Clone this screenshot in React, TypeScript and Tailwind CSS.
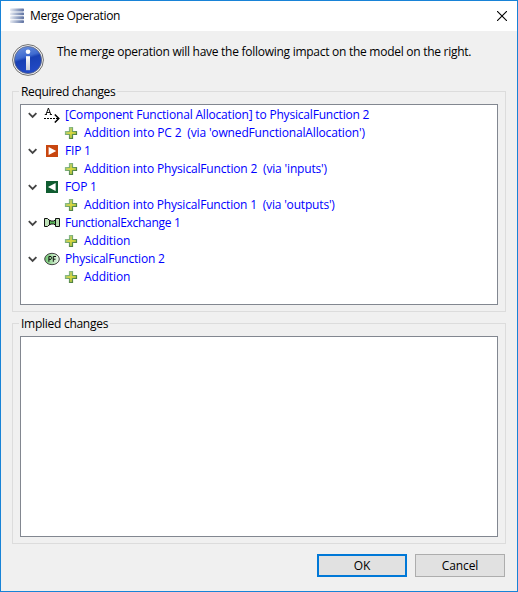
import type { ReactNode } from "react";

function MergeIcon() {
  return (
    <svg width="16" height="16" viewBox="0 0 16 16" className="shrink-0">
      <defs>
        <linearGradient id="bar" x1="0" x2="1" y1="0" y2="0">
          <stop offset="0" stopColor="#e6eaf2" />
          <stop offset="0.5" stopColor="#9dabc9" />
          <stop offset="1" stopColor="#5c70a0" />
        </linearGradient>
      </defs>
      {[0.5, 4.4, 8.3, 12.2].map((y) => (
        <rect key={y} x="1" y={y} width="14" height="2.9" rx="0.8" fill="url(#bar)" />
      ))}
    </svg>
  );
}

function InfoIcon() {
  return (
    <svg width="32" height="32" viewBox="0 0 32 32" className="shrink-0">
      <defs>
        <linearGradient id="ball" x1="0" x2="0.3" y1="0" y2="1">
          <stop offset="0" stopColor="#7397e0" />
          <stop offset="0.45" stopColor="#3f6bd0" />
          <stop offset="0.55" stopColor="#1840b4" />
          <stop offset="1" stopColor="#2149c4" />
        </linearGradient>
        <linearGradient id="stem" x1="0" x2="0" y1="0" y2="1">
          <stop offset="0" stopColor="#ffffff" />
          <stop offset="1" stopColor="#c9cdd6" />
        </linearGradient>
      </defs>
      <circle cx="16" cy="16" r="15.4" fill="#f4f4f4" stroke="#6f6f6f" strokeWidth="1" />
      <circle cx="16" cy="16" r="13.6" fill="url(#ball)" stroke="#5c6580" strokeWidth="0.8" />
      <circle cx="16" cy="7.8" r="2.3" fill="#fff" />
      <path d="M14 12.2h4v14h-4z" fill="url(#stem)" />
    </svg>
  );
}

function AllocationIcon() {
  return (
    <svg width="16" height="16" viewBox="0 0 16 16" className="shrink-0" fill="none" stroke="#000">
      <path d="M2 7.5 L4.4 1 L6.8 7.5 M2.8 5.5H6 M.8 7.5H3 M5.8 7.5H8" strokeWidth="0.9" />
      <path d="M0 11.5H14" strokeDasharray="2 1" />
      <path d="M10.8 7.5 L14.8 11.5 L10.8 15.5" strokeWidth="1.5" />
    </svg>
  );
}

function InPortIcon() {
  return (
    <svg width="16" height="16" viewBox="0 0 16 16" className="shrink-0">
      <rect x="2" y="2" width="12" height="12" fill="#c8460f" />
      <path d="M4.6 4 L12.2 8 L4.6 12Z" fill="#fff" />
    </svg>
  );
}

function OutPortIcon() {
  return (
    <svg width="16" height="16" viewBox="0 0 16 16" className="shrink-0">
      <rect x="2" y="2" width="12" height="12" fill="#0f5c30" />
      <path d="M11.6 4 L4 8 L11.6 12Z" fill="#fff" />
    </svg>
  );
}

function ExchangeIcon() {
  return (
    <svg width="16" height="16" viewBox="0 0 16 16" className="shrink-0" stroke="#111">
      <path d="M.5 3.5H3.5L5.5 5.5V9.5L3.5 11.5H.5Z" fill="#c0e2b9" />
      <path d="M11.5 3.5H15.5V11.5H11.5Z" fill="#b5dcae" />
      <path d="M5.5 5L7 6H9.5L11.5 5V10L9.5 9H7L5.5 10Z" fill="#5cb85c" />
    </svg>
  );
}

function FunctionIcon() {
  return (
    <svg width="16" height="16" viewBox="0 0 16 16" className="shrink-0">
      <defs>
        <linearGradient id="oval" x1="0" x2="1" y1="0" y2="0">
          <stop offset="0" stopColor="#6cc46c" />
          <stop offset="1" stopColor="#f0faee" />
        </linearGradient>
      </defs>
      <ellipse cx="8" cy="8" rx="7.3" ry="5.7" fill="url(#oval)" stroke="#444" />
      <path d="M4.9 10.8V5.5H7L7.6 6.2V7.6L7 8.3H5 M9.3 10.8V5.5H12 M9.3 8.2H11.5" fill="none" stroke="#111" />
    </svg>
  );
}

function PlusIcon() {
  return (
    <svg width="16" height="16" viewBox="0 0 16 16" className="shrink-0">
      <defs>
        <linearGradient id="plus" x1="0" x2="1" y1="0" y2="1">
          <stop offset="0.1" stopColor="#9cc486" />
          <stop offset="0.5" stopColor="#dcd83c" />
          <stop offset="0.9" stopColor="#8fb94c" />
        </linearGradient>
        <linearGradient id="plusEdge" x1="0" x2="1" y1="0" y2="1">
          <stop offset="0.2" stopColor="#8cbd88" />
          <stop offset="0.8" stopColor="#4f8040" />
        </linearGradient>
      </defs>
      <path d="M6.5 2.5H9.5V6.5H13.5V9.5H9.5V13.5H6.5V9.5H2.5V6.5H6.5Z" fill="url(#plus)" stroke="url(#plusEdge)" strokeWidth="1.2" />
    </svg>
  );
}

function Chevron() {
  return (
    <svg width="10" height="8" viewBox="0 0 10 8" className="mr-[6px] shrink-0" fill="none" stroke="#444444" strokeWidth="1.8">
      <path d="M.8 2.1 L4.6 5.9 L8.4 2.1" />
    </svg>
  );
}

function Parent({ icon, children, spacing }: { icon: ReactNode; children: ReactNode; spacing: string }) {
  return (
    <div className="flex h-[18px] items-center pl-[7px]">
      <Chevron />
      {icon}
      <span className={`ml-[5px] whitespace-pre ${spacing}`}>{children}</span>
    </div>
  );
}

function Child({ children, spacing }: { children: ReactNode; spacing: string }) {
  return (
    <div className="flex h-[18px] items-center pl-[42px]">
      <PlusIcon />
      <span className={`ml-[5px] whitespace-pre ${spacing}`}>{children}</span>
    </div>
  );
}

function Group({ title, spacing, children }: { title: string; spacing: string; children?: ReactNode }) {
  return (
    <section className="flex h-[221px] flex-col border border-[#dcdcdc] px-[7px] pb-[6px]">
      <h2 className={`-mt-[8px] mb-[4px] -ml-px h-4 self-start bg-[#f0f0f0] px-[2px] leading-4 ${spacing}`}>{title}</h2>
      <div className="min-h-0 flex-1 border border-[#828790] bg-white pt-px text-[#0000ff]">{children}</div>
    </section>
  );
}

export default function App() {
  return (
    <div className="flex h-[592px] w-[518px] flex-col border border-[#1883d7] bg-[#f0f0f0] font-['Open_Sans',sans-serif] text-[12px] leading-4 text-black">
      <header className="flex h-[30px] shrink-0 items-center bg-white pr-[10px] pl-[8px]">
        <MergeIcon />
        <h1 className="ml-[5px] flex-1 whitespace-nowrap tracking-[-0.38px]">Merge Operation</h1>
        <svg width="10" height="10" viewBox="0 0 10 10" stroke="#000" strokeWidth="1.1" className="mb-px shrink-0">
          <path d="M0 0 L10 10 M10 0 L0 10" />
        </svg>
      </header>
      <main className="flex flex-1 flex-col px-[11px]">
        <div className="flex h-[60px] shrink-0 pt-[13px]">
          <InfoIcon />
          <p className="ml-[13px] whitespace-nowrap tracking-[-0.27px]">The merge operation will have the following impact on the model on the right.</p>
        </div>
        <div className="flex flex-col gap-[11px]">
          <Group title="Required changes" spacing="tracking-[-0.36px]">
            <Parent icon={<AllocationIcon />} spacing="tracking-[-0.19px]">[Component Functional Allocation] to PhysicalFunction 2</Parent>
            <Child spacing="tracking-[-0.15px]">{"Addition into PC 2  (via 'ownedFunctionalAllocation')"}</Child>
            <Parent icon={<InPortIcon />} spacing="tracking-[-0.2px]">FIP 1</Parent>
            <Child spacing="tracking-[-0.17px]">{"Addition into PhysicalFunction 2  (via 'inputs')"}</Child>
            <Parent icon={<OutPortIcon />} spacing="tracking-[-0.2px]">FOP 1</Parent>
            <Child spacing="tracking-[-0.18px]">{"Addition into PhysicalFunction 1  (via 'outputs')"}</Child>
            <Parent icon={<ExchangeIcon />} spacing="tracking-[-0.3px]">FunctionalExchange 1</Parent>
            <Child spacing="tracking-[-0.12px]">Addition</Child>
            <Parent icon={<FunctionIcon />} spacing="tracking-[-0.2px]">PhysicalFunction 2</Parent>
            <Child spacing="tracking-[-0.12px]">Addition</Child>
          </Group>
          <Group title="Implied changes" spacing="tracking-[-0.27px]" />
        </div>
        <footer className="mt-[10px] flex justify-end gap-2 pr-px">
          <button className="h-[23px] w-[90px] border-2 border-[#0078d7] bg-[#e1e1e1] leading-[19px]">OK</button>
          <button className="h-[23px] w-[90px] border border-[#adadad] bg-[#e1e1e1] leading-[21px] tracking-[-0.1px]">Cancel</button>
        </footer>
      </main>
    </div>
  );
}
